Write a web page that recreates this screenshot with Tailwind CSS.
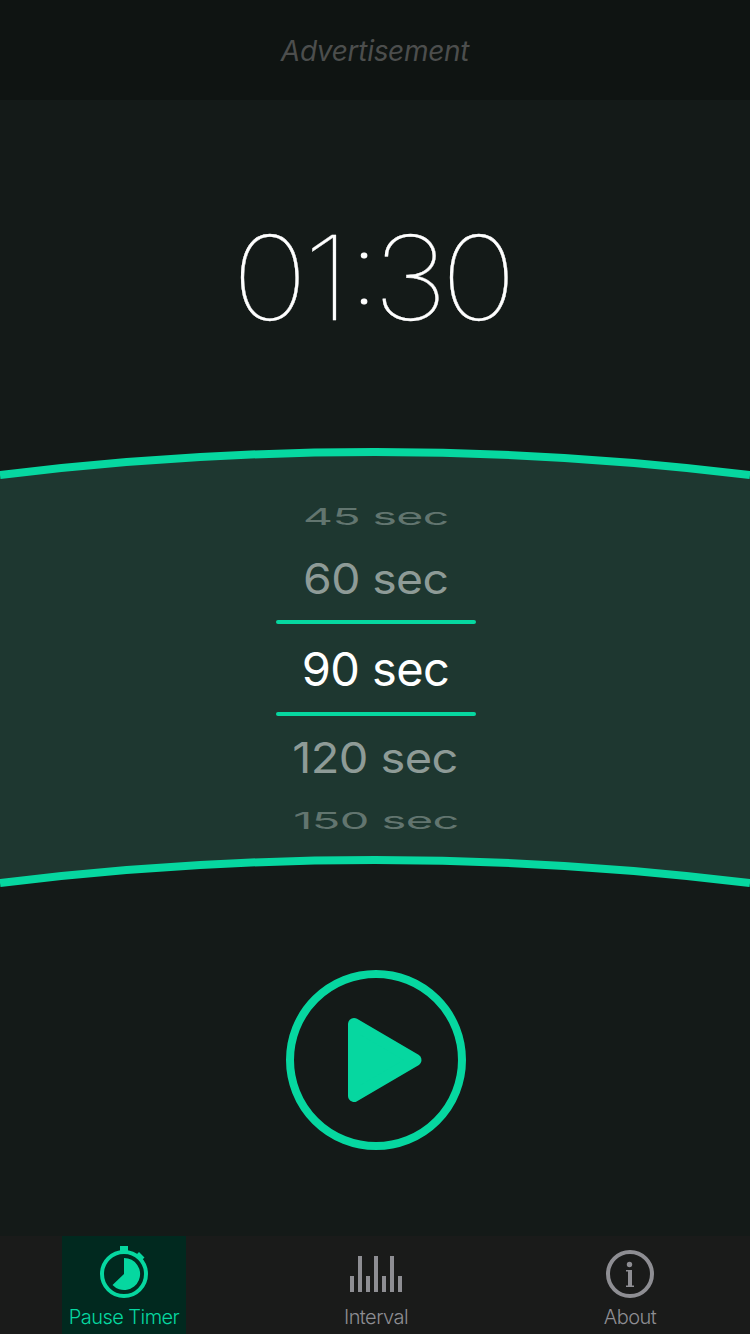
<!DOCTYPE html>
<html lang="en">
<head>
<meta charset="utf-8">
<title>Pause Timer</title>
<script src="https://cdn.jsdelivr.net/npm/@tailwindcss/browser@4"></script>
</head>
<body class="bg-[#141a18]">
<div class="w-[750px] h-[1334px] flex flex-col overflow-hidden bg-[#141a18] font-['Inter',sans-serif]">
  <header class="h-[100px] shrink-0 bg-[#0f1412] flex items-center justify-center">
    <span class="italic text-[28px] leading-none font-[370] text-[#4c4e4d] tracking-[-0.3px] pt-px">Advertisement</span>
  </header>

  <section class="h-[348px] shrink-0 pt-[99px]">
    <svg width="750" height="157" viewBox="0 -20 750 157">
      <text class="text-[117px] font-thin" transform="scale(1.1 1)" text-anchor="middle" fill="#fff" stroke="#fff" stroke-width="0.3" x="245.300 297.100 330.900 373 435.300" y="101 101 84.700 101 101">01<tspan class="text-[98px]" stroke-width="0.9">:</tspan>30</text>
    </svg>
  </section>

  <section class="relative h-[440px] shrink-0">
    <svg class="absolute inset-0" width="750" height="440" viewBox="0 0 750 440" fill="none">
      <path d="M0 27Q375 -19 750 27V435Q375 389 0 435Z" fill="#1e3730"/>
      <path d="M0 27Q375 -19 750 27M0 435Q375 389 750 435" stroke="#06d7a0" stroke-width="8"/>
    </svg>
    <div class="relative flex flex-col items-center text-[47px] tracking-[-0.6px] text-white pt-[48px] pl-[2px] whitespace-pre">
      <div class="h-[40px] flex items-center text-[#62756f]"><span class="leading-none scale-y-50 scale-x-[0.985]">45 sec</span></div>
      <div class="h-[84px] pt-px flex items-center text-[#8e9b97]"><span class="leading-none scale-y-90 scale-x-[0.985]">60 sec</span></div>
      <div class="w-[200px] h-1 rounded-full bg-[#06d7a0]"></div>
      <div class="h-[88px] pt-px pr-px flex items-center"><span class="leading-none">90 sec</span></div>
      <div class="w-[200px] h-1 rounded-full bg-[#06d7a0]"></div>
      <div class="h-[84px] pb-px pr-[2px] flex items-center text-[#8e9b97]"><span class="leading-none scale-y-90">120 sec</span></div>
      <div class="h-[40px] flex items-center text-[#62756f]"><span class="leading-none scale-y-50">150 sec</span></div>
    </div>
  </section>

  <section class="h-[348px] shrink-0 flex justify-center pt-[82px] pl-[2px]">
    <svg width="180" height="180" viewBox="0 0 180 180">
      <circle cx="90" cy="90" r="86" fill="none" stroke="#06d7a0" stroke-width="8"/>
      <path d="M68 54L129.500 90L68 126Z" fill="#06d7a0" stroke="#06d7a0" stroke-width="12" stroke-linejoin="round"/>
    </svg>
  </section>

  <nav class="h-[98px] shrink-0 bg-[#1a1b1a] flex justify-between pl-[62px] pr-[58px] text-[20px] leading-none font-[360] tracking-[-0.55px] text-[#8e8e93]">
    <div class="w-[124px] bg-[#01291f] text-[#06d7a0] flex flex-col items-center">
      <svg class="mt-2" width="56" height="56" viewBox="0 0 56 56" fill="none">
        <circle cx="28" cy="30" r="22" stroke="#06d7a0" stroke-width="4"/>
        <path d="M24 2h8v6h-8zM40.500 10.500L43 8L48.500 13.500L46 16Z" fill="#06d7a0"/>
        <path d="M28 30V14A16 16 0 1 1 16.500 41Z" fill="#06d7a0"/>
      </svg>
      <span class="mt-[7px]">Pause Timer</span>
    </div>
    <div class="w-[124px] -ml-[2px] flex flex-col items-center">
      <svg class="mt-2" width="56" height="56" viewBox="0 0 56 56" fill="#8e8e93">
        <path d="M2 32h4v16H2zM10 12h4v36h-4zM18 32h4v16h-4zM26 12h4v36h-4zM34 32h4v16h-4zM42 12h4v36h-4zM50 32h4v16h-4z"/>
      </svg>
      <span class="mt-[7px]">Interval</span>
    </div>
    <div class="w-[124px] flex flex-col items-center">
      <svg class="mt-2" width="56" height="56" viewBox="0 0 56 56" fill="none">
        <circle cx="28" cy="30" r="22" stroke="#8e8e93" stroke-width="4"/>
        <circle cx="27.500" cy="20.500" r="2.700" fill="#8e8e93"/>
        <path d="M24 26h6v15.500h2V43h-8v-1.500h2V27.500h-2z" fill="#8e8e93"/>
      </svg>
      <span class="mt-[7px]">About</span>
    </div>
  </nav>
</div>
</body>
</html>
